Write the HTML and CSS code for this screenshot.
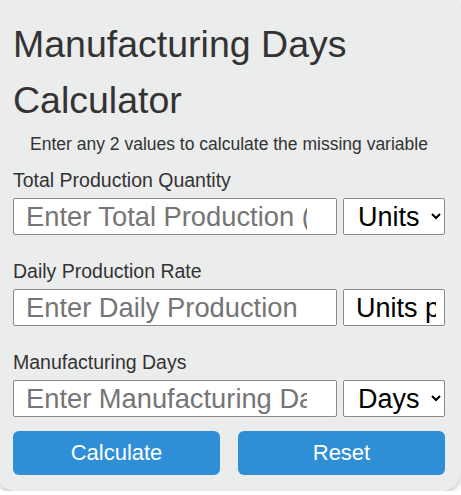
FILE: index.html
```html
<!DOCTYPE html>
<html lang="en">
<head>
<meta charset="utf-8">
<title>Manufacturing Days Calculator</title>
<link rel="stylesheet" href="styles.css">
</head>
<body>
<div class="card">
  <h1 class="title">Manufacturing Days Calculator</h1>
  <p class="subtitle">Enter any 2 values to calculate the missing variable</p>

  <div class="field">
    <label class="label" for="qty">Total Production Quantity</label>
    <div class="row">
      <input class="input" id="qty" type="text" placeholder="Enter Total Production (units)">
      <select class="unit">
        <option>Units</option>
      </select>
    </div>
  </div>

  <div class="field">
    <label class="label" for="rate">Daily Production Rate</label>
    <div class="row">
      <input class="input" id="rate" type="text" placeholder="Enter Daily Production Rate">
      <select class="unit unit--long">
        <option>Units per Day</option>
      </select>
    </div>
  </div>

  <div class="field">
    <label class="label" for="days">Manufacturing Days</label>
    <div class="row">
      <input class="input" id="days" type="text" placeholder="Enter Manufacturing Days">
      <select class="unit">
        <option>Days</option>
      </select>
    </div>
  </div>

  <div class="actions">
    <button class="btn" type="button">Calculate</button>
    <button class="btn" type="button">Reset</button>
  </div>
</div>
</body>
</html>
```
FILE: styles.css
```css
html, body {
  margin: 0;
  padding: 0;
  background: #ffffff;
}
body {
  font-family: "Liberation Sans", Arial, sans-serif;
  color: #333333;
  overflow: hidden;
}
.card {
  box-sizing: border-box;
  width: calc(100% + 4px);
  margin: -10px 0 0 -4px;
  padding: 26px 16px 16px 17px;
  background: #ebecec;
  border-radius: 20px;
  box-shadow: 0 2px 6px rgba(0, 0, 0, 0.25);
}
.title {
  margin: 0;
  font-size: 37.5px;
  line-height: 56px;
  font-weight: normal;
  color: #333333;
}
.subtitle {
  margin: 6px 0 0;
  font-size: 17.5px;
  line-height: 20px;
  text-align: center;
  color: #333333;
}
.field {
  margin-bottom: 25px;
}
.field:first-of-type {
  margin-top: 15px;
}
.label {
  display: block;
  font-size: 19.5px;
  line-height: 23px;
  margin-bottom: 6px;
  color: #333333;
}
.row {
  display: flex;
  gap: 6px;
}
.input {
  flex: 1;
  min-width: 0;
  box-sizing: border-box;
  height: 37px;
  margin: 0;
  padding: 0 29px 0 12px;
  border: 1px solid #8a8a8a;
  border-radius: 2px;
  background: #ffffff;
  font-family: "Liberation Sans", Arial, sans-serif;
  font-size: 27.3px;
  color: #000000;
}
.input::placeholder {
  color: #757575;
}
.unit {
  box-sizing: border-box;
  width: 102px;
  height: 37px;
  margin: 0;
  padding: 0 0 0 10px;
  border: 1px solid #8a8a8a;
  border-radius: 2px;
  background: #ffffff;
  font-family: "Liberation Sans", Arial, sans-serif;
  font-size: 27px;
  color: #000000;
}
.unit--long {
  appearance: none;
  -webkit-appearance: none;
  padding: 0 8px 0 12px;
  overflow: hidden;
}
.actions {
  display: grid;
  grid-template-columns: 1fr 1fr;
  gap: 18px;
  margin-top: -11px;
}
.btn {
  height: 44px;
  border: 0;
  border-radius: 6px;
  background: #2e8fd7;
  color: #ffffff;
  font-family: "Liberation Sans", Arial, sans-serif;
  font-size: 22px;
  cursor: pointer;
}
```
